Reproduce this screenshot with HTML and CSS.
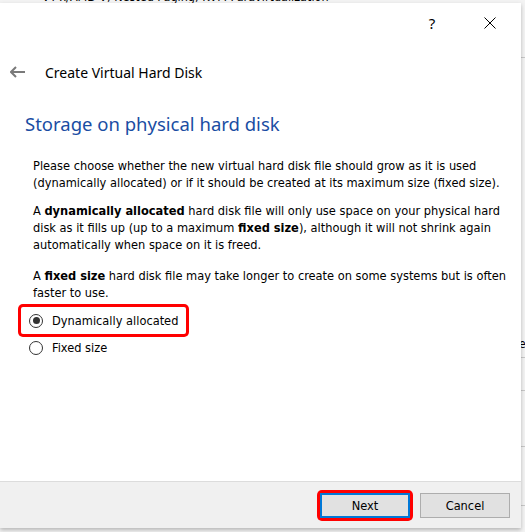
FILE: index.html
```html
<!DOCTYPE html>
<html>
<head>
<meta charset="utf-8">
<link rel="stylesheet" href="styles.css">
</head>
<body>
<div class="desktop">
  <div class="behind-text">VT-x/AMD-V, Nested Paging, KVM Paravirtualization</div>
  <div class="behind-lines">
    <div class="bl" style="top:57px"></div>
    <div class="bl" style="top:357px"></div>
    <div class="bl" style="top:390px"></div>
    <div class="bl" style="top:446px"></div>
    <div class="bl" style="top:505px"></div>
  </div>
  <div class="behind-e">e</div>
  <div class="dialog">
    <div class="titlebar">
      <div class="tb-btn help">?</div>
      <div class="tb-btn close">
        <svg width="12" height="12" viewBox="0 0 12 12"><path d="M0.5 0.5 L11.5 11.5 M11.5 0.5 L0.5 11.5" stroke="#000" stroke-width="1" fill="none"/></svg>
      </div>
    </div>
    <div class="header">
      <svg class="back" width="16" height="12" viewBox="0 0 16 12"><path d="M1 6 H15 M6 1 L1 6 L6 11" stroke="#7a7a7a" stroke-width="2" fill="none"/></svg>
      <span class="header-title">Create Virtual Hard Disk</span>
    </div>
    <div class="content">
      <h1 class="heading">Storage on physical hard disk</h1>
      <p class="para">Please choose whether the new virtual hard disk file should grow as it is used (dynamically allocated) or if it should be created at its maximum size (fixed size).</p>
      <p class="para para-wide">A <b>dynamically allocated</b> hard disk file will only use space on your physical hard disk as it fills up (up to a maximum <b>fixed size</b>), although it will not shrink again automatically when space on it is freed.</p>
      <p class="para">A <b>fixed size</b> hard disk file may take longer to create on some systems but is often faster to use.</p>
      <div class="options">
        <div class="option highlighted">
          <span class="radio checked"></span><span class="opt-label">Dynamically allocated</span>
        </div>
        <div class="option">
          <span class="radio"></span><span class="opt-label">Fixed size</span>
        </div>
      </div>
    </div>
    <div class="footer">
      <div class="btn-wrap highlighted-btn"><button class="btn default">Next</button></div>
      <button class="btn">Cancel</button>
    </div>
  </div>
</div>
</body>
</html>
```

FILE: styles.css
```css
html, body {
  margin: 0;
  padding: 0;
}
body {
  width: 525px;
  height: 532px;
  overflow: hidden;
  background: #e6e6e6;
  font-family: "DejaVu Sans Condensed", "DejaVu Sans", sans-serif;
}
.desktop {
  position: relative;
  width: 525px;
  height: 532px;
  background: #f3f3f3;
  overflow: hidden;
}
.behind-text {
  position: absolute;
  left: 42px;
  top: -11px;
  font-family: "DejaVu Sans Condensed", sans-serif;
  font-size: 12.5px;
  color: #000;
  white-space: nowrap;
}
.behind-lines .bl {
  position: absolute;
  left: 521px;
  width: 4px;
  height: 1px;
  background: #c8c8c8;
}
.behind-e {
  position: absolute;
  left: 519px;
  top: 337px;
  font-size: 12px;
  color: #000;
}
.dialog {
  position: absolute;
  left: 0;
  top: 3px;
  width: 521px;
  height: 525px;
  background: #fff;
  display: flex;
  flex-direction: column;
  box-shadow: 0 2px 4px rgba(0,0,0,0.25);
}
.titlebar {
  height: 40px;
  display: flex;
  justify-content: flex-end;
  padding-right: 2px;
}
.tb-btn {
  width: 58px;
  display: flex;
  align-items: center;
  justify-content: center;
  font-family: "Noto Sans", sans-serif;
  font-size: 15px;
  color: #000;
}
.header {
  height: 38px;
  display: flex;
  align-items: center;
  padding-left: 10px;
  margin-top: 10px;
}
.back {
  margin-right: 19px;
}
.header-title {
  font-family: "Noto Sans", sans-serif;
  font-size: 14px;
  color: #000;
}
.content {
  flex: 1;
  padding-left: 25px;
}
.heading {
  margin: 20px 0 0 0;
  font-family: "Noto Sans", sans-serif;
  font-weight: normal;
  font-size: 18.5px;
  line-height: 26px;
  color: #1a4da3;
}
.para {
  margin: 0 0 11px 8px;
  font-size: 12.7px;
  line-height: 17px;
  color: #000;
  width: 476px;
}
.para-wide {
  margin-bottom: 14px;
}
.heading + .para {
  margin-top: 20px;
}
.options {
  margin-top: -5px;
}
.option {
  display: flex;
  align-items: center;
  box-sizing: border-box;
  height: 27px;
  width: 165px;
  padding-left: 8px;
  margin-left: -4px;
}
.option.highlighted {
  box-shadow: 0 0 0 3px #ff0000;
  border-radius: 2px;
}
.radio {
  width: 14px;
  height: 14px;
  border: 1px solid #333;
  border-radius: 50%;
  background: #fff;
  box-sizing: border-box;
  position: relative;
  margin-right: 9px;
  flex: none;
}
.radio.checked::after {
  content: "";
  position: absolute;
  left: 2.5px;
  top: 2.5px;
  width: 7px;
  height: 7px;
  border-radius: 50%;
  background: #333;
}
.opt-label {
  font-size: 12.7px;
  color: #000;
}
.footer {
  height: 46px;
  background: #f0f0f0;
  border-top: 1px solid #dcdcdc;
  display: flex;
  justify-content: flex-end;
  align-items: center;
  padding-right: 11px;
  gap: 10px;
}
.btn-wrap.highlighted-btn {
  box-shadow: 0 0 0 3px #ff0000;
  border-radius: 2px;
}
.btn {
  width: 90px;
  height: 25px;
  background: #e1e1e1;
  border: 1px solid #adadad;
  font-family: "DejaVu Sans Condensed", "DejaVu Sans", sans-serif;
  font-size: 12.7px;
  color: #000;
  padding: 0;
  display: block;
}
.btn.default {
  border: 2px solid #0078d7;
}
```
